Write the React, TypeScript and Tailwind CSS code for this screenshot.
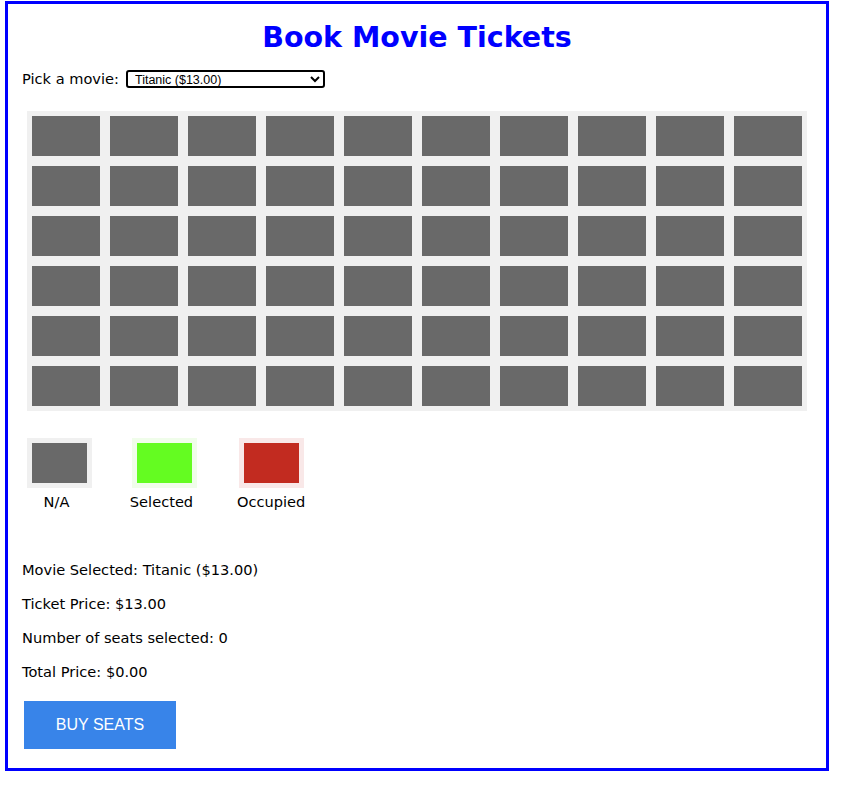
const rows = 6;
const cols = 10;

function Seat() {
  return <div className="w-[68px] h-[40px] bg-[#696969]" />;
}

function LegendItem({ label, outer, inner, labelClass }: { label: string; outer: string; inner: string; labelClass: string }) {
  return (
    <div className="flex flex-col items-center">
      <div className={`p-[5px] ${outer}`}>
        <div className={`w-[55px] h-[40px] ${inner}`} />
      </div>
      <span className={`mt-[3px] ${labelClass}`}>{label}</span>
    </div>
  );
}

export default function App() {
  return (
    <div className="bg-white min-h-screen pt-[1px] pl-[5px] font-['DejaVu_Sans',Verdana,sans-serif] text-[14.6px] text-black">
      <div className="w-[824px] h-[770px] border-[3px] border-[#0000ff] px-[14px] pt-[14px]">
        <h1 className="text-center text-[28.5px] font-bold text-[#0000ff] leading-[40px]">Book Movie Tickets</h1>

        <div className="flex items-center mt-[10px] gap-[7px]">
          <label>Pick a movie:</label>
          <select className="w-[199px] h-[18px] border-2 border-black rounded-[3px] text-[12.5px] font-['Liberation_Sans',Arial,sans-serif] pl-[3px] leading-none">
            <option>Titanic ($13.00)</option>
            <option>Avengers ($10.00)</option>
          </select>
        </div>

        <div className="ml-[5px] mt-[21px] w-[780px] p-[5px] bg-[#f0f0f0] grid grid-cols-10 gap-[10px]">
          {Array.from({ length: rows * cols }).map((_, i) => (
            <Seat key={i} />
          ))}
        </div>

        <div className="flex ml-[5px] mt-[27px] gap-[40px] items-start">
          <LegendItem label="N/A" outer="bg-[#f0f0f0]" inner="bg-[#696969]" labelClass="ml-[-6px]" />
          <LegendItem label="Selected" outer="bg-[#f0fdea]" inner="bg-[#64fc21]" labelClass="ml-[-6px]" />
          <LegendItem label="Occupied" outer="bg-[#f9e8e8]" inner="bg-[#c22b20]" labelClass="" />
        </div>

        <div className="mt-[48px] flex flex-col gap-[17px] leading-[17px]">
          <p>Movie Selected: Titanic ($13.00)</p>
          <p>Ticket Price: $13.00</p>
          <p>Number of seats selected: 0</p>
          <p>Total Price: $0.00</p>
        </div>

        <button className="mt-[21px] ml-[2px] w-[152px] h-[48px] bg-[#3884e9] text-white text-[16px] font-['Liberation_Sans',Arial,sans-serif]">
          BUY SEATS
        </button>
      </div>
    </div>
  );
}
